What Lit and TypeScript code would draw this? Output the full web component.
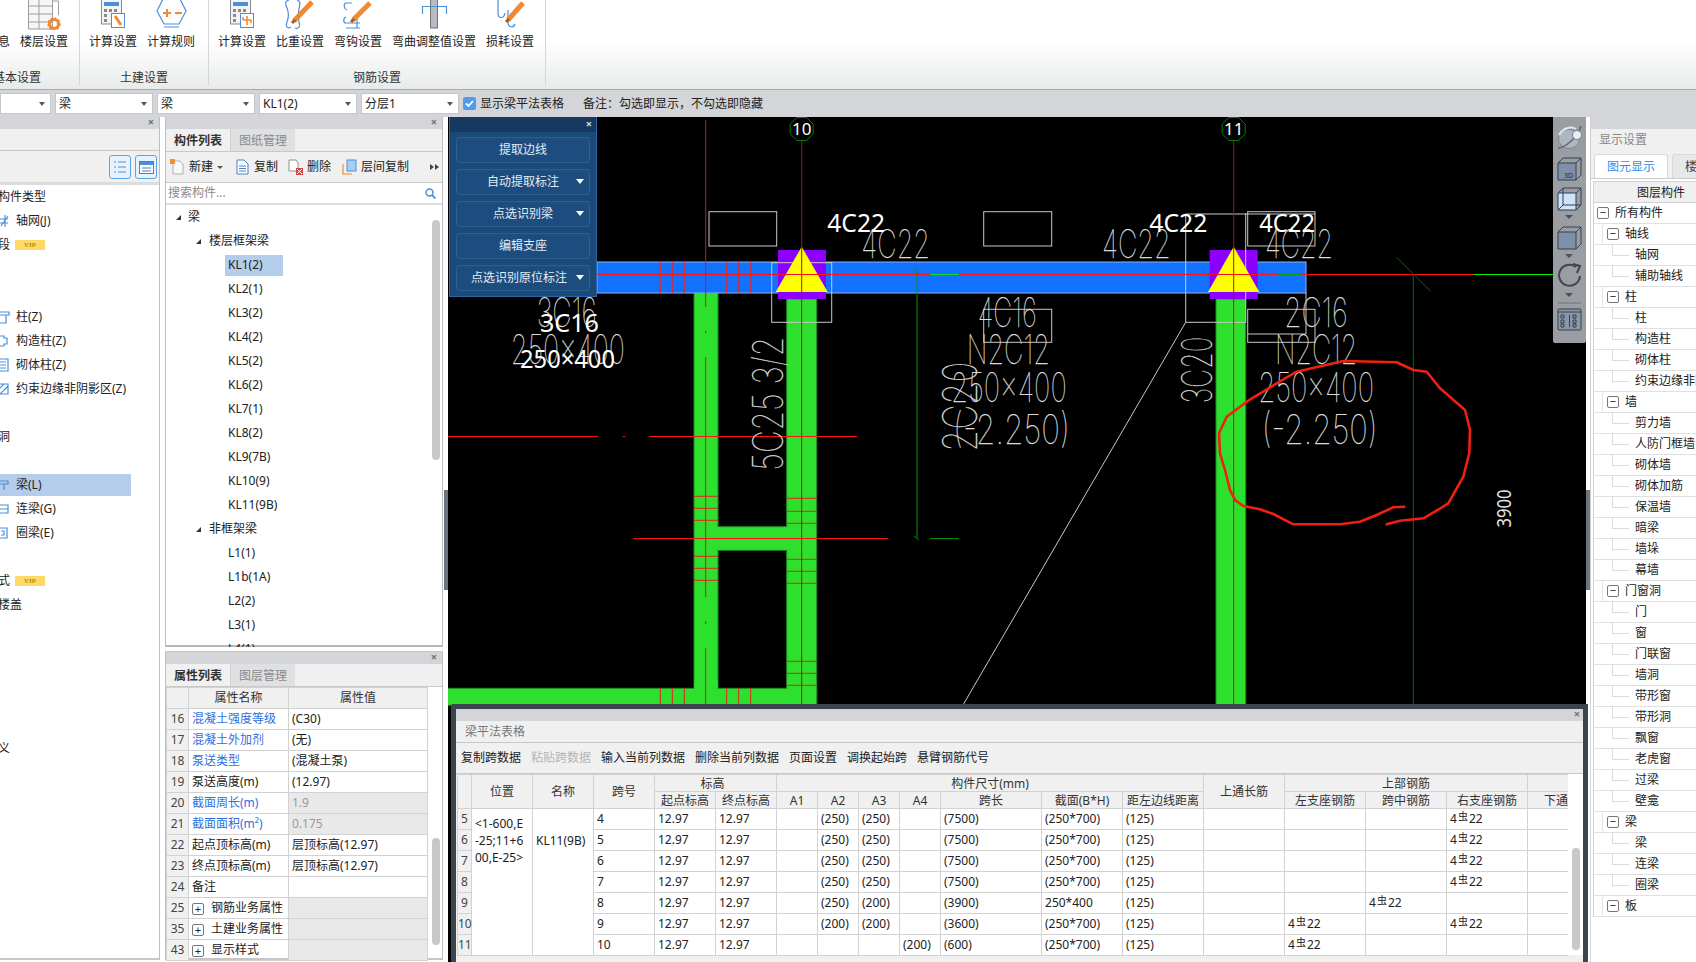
import { LitElement, html, svg, css } from 'lit';
import { customElement } from 'lit/decorators.js';

const pencil = (x1: number, y1: number, x2: number, y2: number) => svg`
  <line x1=${x1} y1=${y1} x2=${x2} y2=${y2} stroke="#f08a30" stroke-width="5"/>
  <line x1=${x1 - 2} y1=${y1 + 2} x2=${x1 + 1} y2=${y1 - 1} stroke="#a85a20" stroke-width="3"/>`;

const calcSheet = svg`
  <rect x="8.5" y="-3" width="20" height="27" fill="#f4f4f4" stroke="#858a90"/>
  <rect x="11" y="2" width="15" height="4" fill="#4a90d9"/>
  <path d="M11 9h3v3h-3zM16 9h3v3h-3zM21 9h3v3h-3zM11 14h3v3h-3zM11 19h3v3h-3z" fill="#858a90"/>
  <rect x="18.5" y="13.5" width="13" height="14" fill="#fff" stroke="#4a90d9"/>`;

const ribbonIcons: Record<string, unknown> = {
  floor: svg`
    <path d="M4.5 -2v31h24v-31M4.5 6h24M4.5 14h24M4.5 22h24M15 -2v31" fill="#f6f6f6" stroke="#9a9ea3"/>
    <path d="M28.5 1h6v14" fill="none" stroke="#9a9ea3"/>
    <circle cx="30" cy="24" r="4.5" fill="none" stroke="#f08a30" stroke-width="3"/>
    <circle cx="30" cy="24" r="6" fill="none" stroke="#f08a30" stroke-width="1.5" stroke-dasharray="2 2"/>`,
  calcTool: svg`${calcSheet}<path d="M22 16l6 9" stroke="#f08a30" stroke-width="3"/>`,
  rule: svg`
    <path d="M6 11L13 -3H28L35 11L28 24H13Z" fill="#fff" stroke="#4a90d9" stroke-width="1.2"/>
    <path d="M12 13h8M16 9v8M24 13h7" stroke="#f08a30" stroke-width="2" fill="none"/>
    <path d="M13 27h15" stroke="#4a90d9"/>`,
  calcRebar: svg`${calcSheet}<path d="M21 20h8M25 16v9M21 20v-3M29 20v3" stroke="#f08a30" stroke-width="1.6" fill="none"/>`,
  weight: svg`
    <path d="M9 0C5 1 5 4 7 8C9 13 9 17 7 22C5 27 8 29 11 27M17 0C21 1 20 5 19 9C18 14 18 18 19 22C21 28 17 29 15 28" fill="none" stroke="#4a90d9" stroke-width="1.2"/>
    ${pencil(14, 21, 32, 2)}`,
  hook: svg`
    <path d="M14 3H8C5 4 6 9 9 10M8 23H22M8 17C5 18 5 23 8 23M19 14V28M8 28H22" fill="none" stroke="#4a90d9" stroke-width="1.2"/>
    ${pencil(15, 20, 32, 3)}`,
  bend: svg`
    <rect x="16.5" y="-2" width="7" height="30" fill="#b8bcc0" stroke="#6f7479"/>
    <path d="M8.5 14V6.5H32.5V14" fill="none" stroke="#4a90d9" stroke-width="1.2"/>`,
  loss: svg`
    <path d="M8 -2V13C8 19 14 19 15 13M18 10V22C18 28 24 28 25 24" fill="none" stroke="#4a90d9" stroke-width="1.2"/>
    ${pencil(18, 20, 33, 3)}`,
};

const ribbon = [
  { label: '基本设置', width: 80, end: true, items: [['息', ''], ['楼层设置', 'floor']] },
  { label: '土建设置', width: 129, items: [['计算设置', 'calcTool'], ['计算规则', 'rule']] },
  {
    label: '钢筋设置', width: 337, items: [['计算设置', 'calcRebar'], ['比重设置', 'weight'], ['弯钩设置', 'hook'],
      ['弯曲调整值设置', 'bend'], ['损耗设置', 'loss']],
  },
];

const leftIcon = (d: string) => html`<svg class="left-ico" viewBox="0 0 10 14"><path d=${d} fill="none" stroke="#4a8fd8" stroke-width="1.2"/></svg>`;

const leftRows: Array<{ t?: string; icon?: string; vip?: boolean; sel?: boolean; cut?: boolean }> = [
  { t: '构件类型', cut: true },
  { t: '轴网(J)', icon: 'M-2 5H8M-2 9H8M5 1V13M1 12L8 2' },
  { t: '段', cut: true, vip: true },
  {}, {},
  { t: '柱(Z)', icon: 'M-2 2H9V5H-2M6 5V13H-2' },
  { t: '构造柱(Z)', icon: 'M-2 2H4V4H7V10H4V12H-2' },
  { t: '砌体柱(Z)', icon: 'M-2 1H8V13H-2M0 4H6M0 7H6M0 10H6' },
  { t: '约束边缘非阴影区(Z)', icon: 'M-2 2H8V12H-2ZM0 12L8 4M-2 8L4 2' },
  {},
  { t: '洞', cut: true },
  {},
  { t: '梁(L)', sel: true, icon: 'M-2 3H8V6H-2M4 6V12' },
  { t: '连梁(G)', icon: 'M-2 3H8V11H-2M-2 7H8' },
  { t: '圈梁(E)', icon: 'M-2 2H7V12H-2M1 5H4V9H1' },
  {},
  { t: '式', cut: true, vip: true },
  { t: '楼盖', cut: true },
  {}, {}, {}, {}, {},
  { t: '义', cut: true },
];

const treeRows: Array<[string, number]> = [
  ['梁', 0], ['楼层框架梁', 1],
  ['KL1(2)', 2], ['KL2(1)', 2], ['KL3(2)', 2], ['KL4(2)', 2], ['KL5(2)', 2], ['KL6(2)', 2],
  ['KL7(1)', 2], ['KL8(2)', 2], ['KL9(7B)', 2], ['KL10(9)', 2], ['KL11(9B)', 2],
  ['非框架梁', 1], ['L1(1)', 2], ['L1b(1A)', 2], ['L2(2)', 2], ['L3(1)', 2], ['L4(1)', 2],
];

const props: Array<{ n: number; name: string; val?: string; link?: boolean; grey?: boolean; plus?: boolean }> = [
  { n: 16, name: '混凝土强度等级', val: '(C30)', link: true },
  { n: 17, name: '混凝土外加剂', val: '(无)', link: true },
  { n: 18, name: '泵送类型', val: '(混凝土泵)', link: true },
  { n: 19, name: '泵送高度(m)', val: '(12.97)' },
  { n: 20, name: '截面周长(m)', val: '1.9', link: true, grey: true },
  { n: 21, name: '截面面积(m²)', val: '0.175', link: true, grey: true },
  { n: 22, name: '起点顶标高(m)', val: '层顶标高(12.97)' },
  { n: 23, name: '终点顶标高(m)', val: '层顶标高(12.97)' },
  { n: 24, name: '备注', val: '' },
  { n: 25, name: '钢筋业务属性', plus: true, grey: true },
  { n: 35, name: '土建业务属性', plus: true, grey: true },
  { n: 43, name: '显示样式', plus: true, grey: true },
];

const layers: Array<[string, number]> = [
  ['所有构件', 0], ['轴线', 1], ['轴网', 2], ['辅助轴线', 2], ['柱', 1], ['柱', 2], ['构造柱', 2], ['砌体柱', 2],
  ['约束边缘非阴影区', 2], ['墙', 1], ['剪力墙', 2], ['人防门框墙', 2], ['砌体墙', 2], ['砌体加筋', 2], ['保温墙', 2],
  ['暗梁', 2], ['墙垛', 2], ['幕墙', 2], ['门窗洞', 1], ['门', 2], ['窗', 2], ['门联窗', 2], ['墙洞', 2], ['带形窗', 2],
  ['带形洞', 2], ['飘窗', 2], ['老虎窗', 2], ['过梁', 2], ['壁龛', 2], ['梁', 1], ['梁', 2], ['连梁', 2], ['圈梁', 2], ['板', 1],
];

const spans: Array<{ no: string; a2: string; a3: string; a4: string; len: string; sec: string; mid?: boolean; l?: boolean; r?: boolean }> = [
  { no: '4', a2: '(250)', a3: '(250)', a4: '', len: '(7500)', sec: '(250*700)', r: true },
  { no: '5', a2: '(250)', a3: '(250)', a4: '', len: '(7500)', sec: '(250*700)', r: true },
  { no: '6', a2: '(250)', a3: '(250)', a4: '', len: '(7500)', sec: '(250*700)', r: true },
  { no: '7', a2: '(250)', a3: '(250)', a4: '', len: '(7500)', sec: '(250*700)', r: true },
  { no: '8', a2: '(250)', a3: '(200)', a4: '', len: '(3900)', sec: '250*400', mid: true },
  { no: '9', a2: '(200)', a3: '(200)', a4: '', len: '(3600)', sec: '(250*700)', l: true, r: true },
  { no: '10', a2: '', a3: '', a4: '(200)', len: '(600)', sec: '(250*700)', l: true },
];
const colWidths = [14, 61, 61, 61, 61, 61, 41, 41, 41, 41, 101, 81, 81, 81, 81, 81, 81, 81];

// cad drawing, all numbers are page coordinates
const thin: Array<[string, number, number, number, number]> = [
  ['4C22', 861.3, 229.3, 930, 258.3], ['4C22', 1102, 229.3, 1170.7, 258.3], ['4C22', 1265, 229.3, 1333, 258.3],
  ['3C16', 536.7, 296.7, 596.7, 326.7], ['250×400', 510.7, 334, 625, 364],
  ['4C16', 977.7, 296.7, 1036.7, 326.7], ['N2C12', 966.7, 334, 1050, 364],
  ['250×400', 951, 371.7, 1066.7, 401.7], ['(-2.250)', 953, 414, 1070, 444],
  ['2C16', 1284.3, 296.7, 1347.7, 326.7], ['N2C12', 1275, 334, 1357.3, 364],
  ['250×400', 1258.3, 371.7, 1374, 401.7], ['(-2.250)', 1261.7, 414, 1377.7, 444],
];
const thinUp: Array<[string, number, number, number, number]> = [
  ['5C25 3/2', 752.7, 336.7, 783.3, 470.7], ['3C20', 1181.7, 336.7, 1212.3, 403.3], ['2C20', 942, 361.7, 976.7, 451.7],
];
const bright: Array<[string, number, number, number]> = [
  ['4C22', 827.3, 885, 231.7], ['4C22', 1149.3, 1207.3, 231.7], ['4C22', 1259.3, 1315, 231.7],
  ['3C16', 540, 599, 331.7], ['250×400', 520, 615, 368],
];
const rects = [[709, 211.7, 67.7, 34.3], [983.7, 211.7, 68, 34.3], [771.7, 262.7, 60, 59.6], [983.7, 309.3, 68, 33],
  [1185.7, 214, 60, 108.3], [1247.7, 211.7, 67.3, 34.3], [1247.7, 309.3, 67.3, 33]];
const beamTicks = [660.3, 672.3, 684.3, 726.7, 738.7, 750.7];
const colATicks = [496.3, 508.3, 520.3, 556.3, 568.3, 580.3];
const colBTicks = [498.3, 511.3, 523.3, 559.3, 571.3, 583.3, 661.3, 673.3, 685.3];
const circle = [[1213, 1190], [1180, 1192], [1130, 1215], [1080, 1235], [1020, 1243], [880, 1243], [820, 1212], [780, 1198],
  [730, 1188], [705, 1170], [690, 1140], [675, 1080], [660, 1030], [657, 970], [680, 920], [740, 875], [830, 820], [890, 785],
  [1030, 753], [1190, 757], [1240, 780], [1280, 785], [1320, 835], [1395, 900], [1410, 960], [1408, 1030], [1390, 1100],
  [1345, 1180], [1305, 1205], [1270, 1225], [1200, 1232], [1160, 1243]]
  .map(([x, y]) => `${(1000 + x / 3).toFixed(1)},${(110 + y / 3).toFixed(1)}`).join(' ');

const octagon = (cx: number, cy: number) => Array.from({ length: 8 }, (_, i) => {
  const a = Math.PI / 8 + (i * Math.PI) / 4;
  return `${(cx + 12.5 * Math.cos(a)).toFixed(1)},${(cy + 12.5 * Math.sin(a)).toFixed(1)}`;
}).join(' ');

@customElement('app-root')
export class AppRoot extends LitElement {
  static override styles = css`
    :host {
      display: block;
      width: 1696px;
      height: 962px;
      overflow: hidden;
      background: #fff;
      color: #222;
      font: 12px/16px "Noto Sans", "Noto Sans CJK SC", sans-serif;
    }

    .ribbon { height: 89px; display: flex; background: linear-gradient(#fff 45%, #e9ebeb); box-sizing: border-box; }
    .group { display: flex; flex-direction: column; border-right: 1px solid #d4d6d8; box-sizing: border-box; height: 86px; overflow: hidden; flex: none; }
    .group-items { display: flex; height: 72px; padding-left: 4px; }
    .group.end .group-items { justify-content: flex-end; padding: 0 6px 0 0; }
    .group-label { text-align: center; color: #333; white-space: nowrap; }
    .rib-item { padding: 0 5px; display: flex; flex-direction: column; align-items: center; flex: none; white-space: nowrap; }
    .rib-item svg { width: 40px; height: 30px; display: block; margin-bottom: 4px; }
    .rib-item .no-ico { height: 34px; }

    .bar { height: 28px; background: #d3d5d9; border-top: 1px solid #a9acaf; box-sizing: border-box; display: flex; align-items: center; gap: 4px; }
    .combo { width: 98px; height: 21px; background: #fff; border: 1px solid #c4c6c9; box-sizing: border-box; padding-left: 3px; line-height: 19px; position: relative; }
    .combo.first { width: 51px; }
    .combo::after { content: ''; position: absolute; right: 5px; top: 8px; border: 3.5px solid transparent; border-top: 4px solid #555; border-bottom: 0; }
    .check { width: 13px; height: 13px; background: #4f9df0; border-radius: 2px; display: flex; align-items: center; justify-content: center; }
    .bar-note { margin-left: 15px; }

    .main { display: flex; height: 845px; }
    .pane { border-right: 1px solid #bcbec0; border-left: 1px solid #bcbec0; box-sizing: border-box; position: relative; background: #fff; }
    .pane-head { height: 12px; background: #d3d5d9; position: relative; }
    .close { position: absolute; right: 5px; top: -3px; font-size: 11px; color: #6d7278; font-weight: 700; line-height: 16px; }

    .left { width: 160px; height: 843px; border-left: 0; border-bottom: 2px solid #c4c6c9; }
    .left-tool { height: 50px; background: #f0f0f0; border-bottom: 3px solid #dcdcdc; display: flex; justify-content: flex-end; align-items: flex-end; gap: 4px; padding: 0 2px 3px 0; position: relative; }
    .left-tool::before { content: ''; position: absolute; left: 0; right: 0; top: 21px; height: 1px; background: #c8c8c8; }
    .vbtn { width: 22px; height: 24px; border: 1px solid #58a6e8; border-radius: 3px; box-sizing: border-box; background: #e8f2fc; display: flex; align-items: center; justify-content: center; }
    .left-list { display: flex; flex-direction: column; }
    .left-row { height: 24px; display: flex; align-items: center; padding-left: 16px; position: relative; white-space: nowrap; }
    .left-row.cut { padding-left: 0; margin-left: -2px; }
    .left-row.sel::before { content: ''; position: absolute; left: 0; top: 1px; width: 131px; height: 22px; background: #b4cdea; }
    .left-row span { position: relative; }
    .left-ico { position: absolute; left: 0; top: 5px; width: 10px; height: 14px; overflow: visible; }
    .vip { margin-left: 5px; width: 30px; height: 10px; background: #ffd966; color: #b38b1f; font: 700 7px/10px "Liberation Serif", serif; text-align: center; }

    .mid { width: 278px; margin-left: 5px; display: flex; flex-direction: column; }
    .mid-top { height: 530px; border-bottom: 2px solid #b4b6b8; }
    .mid-bottom { height: 309px; margin-top: 4px; border-top: 1px solid #c4c6c9; border-bottom: 2px solid #c4c6c9; }
    .tabs { height: 22px; background: #f0f0f0; display: flex; border-bottom: 1px solid #c8c8c8; }
    .tab { width: 64px; text-align: center; line-height: 23px; font-weight: 700; color: #333; background: #f0f0f0; }
    .tab.off { background: #dfe0e2; color: #8a8a8a; font-weight: 400; width: 64px; border-left: 1px solid #d0d0d0; }
    .mid-tool { height: 30px; background: #f0f0f0; display: flex; align-items: center; border-bottom: 1px solid #c8c8c8; position: relative; }
    .tool-item { display: flex; align-items: center; gap: 4px; white-space: nowrap; flex: none; }
    .tool-item svg { width: 15px; height: 16px; flex: none; }
    .caret-s { width: 0; height: 0; border: 3px solid transparent; border-top: 3px solid #555; border-bottom: 0; margin-left: 0; }
    .more { position: absolute; right: 3px; top: 11px; width: 9px; height: 8px; }
    .search { height: 20px; border-bottom: 2px solid #dcdcdc; display: flex; align-items: center; justify-content: space-between; padding: 0 6px 0 2px; color: #8a8a8a; }
    .tree { position: relative; height: 442px; overflow: hidden; }
    .tree-row { height: 24px; display: flex; align-items: center; white-space: nowrap; position: relative; }
    .tree-row.l0 { padding-left: 22px; }
    .tree-row.l1 { padding-left: 43px; }
    .tree-row.l2 { padding-left: 62px; }
    .tree-row.sel::before { content: ''; position: absolute; left: 59px; top: 2px; width: 58px; height: 21px; background: #b4cdea; }
    .tree-row span { position: relative; }
    .arrow { position: absolute; top: 10px; width: 0; height: 0; border-left: 5px solid transparent; border-bottom: 5px solid #333; }
    .l0 .arrow { left: 10px; }
    .l1 .arrow { left: 30px; }
    .thumb { position: absolute; background: #c8c8c8; border-radius: 4px; width: 8px; }
    .tree .thumb { left: 266px; top: 15px; height: 240px; }

    .ptable { border-collapse: collapse; table-layout: fixed; width: 261px; }
    .ptable td, .ptable th { height: 20px; padding: 0 3px; border: 1px solid #d2d2d2; font-weight: 400; white-space: nowrap; overflow: hidden; box-sizing: border-box; }
    .ptable th { background: #f0f0f0; color: #333; text-align: center; }
    .ptable tr { height: 21px; }
    .ptable .num { background: #f0f0f0; color: #444; text-align: center; padding: 0; }
    .ptable .link { color: #2f6fe0; }
    .ptable .grey-v { background: #e9e9e9; color: #999; }
    .plus { display: inline-block; width: 12px; height: 12px; border: 1px solid #777; border-radius: 2px; box-sizing: border-box; text-align: center; font: 11px/10px "Liberation Sans", sans-serif; margin-right: 7px; vertical-align: -1px; }
    .pwrap { position: relative; }
    .pwrap .thumb { left: 266px; top: 151px; height: 107px; }

    .canvas { width: 1138px; height: 845px; margin-left: 5px; background: #000; position: relative; flex: none; }
    .canvas > svg { display: block; position: absolute; inset: 0; }
    .handle { position: absolute; width: 4px; height: 100px; top: 373px; background: #6d7580; }
    .handle.l { left: -4px; }
    .handle.r { right: -4px; }

    .cad-panel { position: absolute; left: 1px; top: 0; width: 148px; height: 180px; background: #1c4a78; border: 1px solid #2a68a8; border-top: 0; box-sizing: border-box; }
    .cad-head { height: 15px; background: #17395f; position: relative; }
    .cad-head .close { color: #cfd8e2; top: -1px; right: 4px; }
    .cad-btns { display: flex; flex-direction: column; gap: 6px; padding: 5px 6px 0; }
    .cad-btn { height: 26px; border: 1px solid #2d5f90; border-radius: 3px; box-sizing: border-box; background: #1d4d7f; color: #e4ebf2; display: flex; align-items: center; justify-content: center; position: relative; }
    .cad-btn.caret::after { content: ''; position: absolute; right: 5px; top: 9px; border: 4px solid transparent; border-top: 5px solid #fff; border-bottom: 0; }
    .cad-btn.long { padding-right: 8px; }

    .side-tools { position: absolute; left: 1105px; top: 0; width: 33px; height: 226px; background: #9a9da2; border-radius: 0 0 2px 2px; }
    .side-tools svg { display: block; width: 33px; height: 226px; }

    .dialog { position: absolute; left: 3px; top: 587px; width: 1137px; height: 258px; background: #f0f0f0; border: 5px solid #3c444c; border-bottom: 0; box-sizing: border-box; border-top-left-radius: 3px; }
    .dlg-head { height: 12px; background: #d3d5d9; position: relative; }
    .dlg-head .close { right: 3px; }
    .dlg-title { height: 21px; line-height: 22px; padding-left: 9px; color: #777; border-bottom: 1px solid #c8c8c8; }
    .dlg-tool { height: 31px; display: flex; align-items: center; gap: 10px; padding-left: 5px; border-bottom: 1px solid #c8c8c8; white-space: nowrap; box-sizing: border-box; }
    .dlg-tool .off { color: #b5b5b5; }
    .dlg-body { position: relative; height: 188px; }
    .sheet-wrap { position: absolute; left: 1px; top: 0; width: 1111px; height: 188px; overflow: hidden; }
    .sheet { border-collapse: collapse; table-layout: fixed; width: 1151px; }
    .sheet td, .sheet th { border: 1px solid #d2d2d2; padding: 0 3px; height: 21px; font-weight: 400; white-space: nowrap; box-sizing: border-box; background: #fff; }
    .sheet th { height: 17px; background: #f0f0f0; color: #333; line-height: 15px; padding: 0; text-align: center; }
    .sheet .rownum { background: #f0f0f0; padding: 0; color: #444; text-align: center; overflow: visible; }
    .sheet .place { vertical-align: top; white-space: normal; line-height: 17px; padding-top: 6px; }
    .sheet .kl { vertical-align: top; padding-top: 24px; }
    .sheet .elev { padding-right: 6px; }
    .sup { font-size: 10px; position: relative; top: -3px; margin: 0 1px; }
    .track { position: absolute; left: 1112px; top: 0; width: 15px; height: 181px; background: #fff; }
    .track .thumb { left: 4px; top: 74px; height: 102px; }

    .right { width: 106px; height: 845px; margin-left: 4px; background: #fff; flex: none; overflow: hidden; position: relative; border-left: 1px solid #d0d0d0; box-sizing: border-box; }
    .r-title { height: 23px; background: #f0f0f0; color: #888; line-height: 22px; padding-left: 8px; }
    .r-tabs { height: 27px; background: #f0f0f0; display: flex; align-items: flex-end; gap: 4px; padding-left: 3px; border-bottom: 1px solid #c8c8c8; box-sizing: border-box; }
    .r-tab { width: 74px; height: 24px; background: #fff; color: #3a8be8; text-align: center; line-height: 24px; border: 1px solid #d8d8d8; border-bottom: 0; border-radius: 3px 3px 0 0; box-sizing: border-box; flex: none; }
    .r-tab.off { background: #e8e8e8; color: #444; padding-left: 12px; text-align: left; }
    .r-grid { margin: 2px 0 0 2px; width: 130px; border-left: 1px solid #d2d2d2; }
    .r-head { height: 22px; background: #f0f0f0; text-align: center; line-height: 22px; width: 134px; border-bottom: 1px solid #d2d2d2; box-sizing: border-box; border-top: 1px solid #d2d2d2; }
    .r-row { height: 21px; border-bottom: 1px solid #e0e0e0; box-sizing: border-box; display: flex; align-items: center; position: relative; white-space: nowrap; }
    .r-row.l0 { padding-left: 21px; }
    .r-row.l1 { padding-left: 31px; }
    .r-row.l2 { padding-left: 41px; }
    .minus { position: absolute; top: 4px; width: 12px; height: 12px; border: 1px solid #777; border-radius: 2px; box-sizing: border-box; background: #fff; font: 11px/9px "Liberation Sans", sans-serif; text-align: center; }
    .l0 .minus { left: 3px; }
    .l1 .minus { left: 13px; }
    .r-row.l2::before { content: ''; position: absolute; left: 18px; top: 10px; width: 17px; height: 1px; background: #dcdcdc; }
    .r-row.l2::after { content: ''; position: absolute; left: 18px; top: -1px; width: 1px; height: 12px; background: #dcdcdc; }
    .r-row .v { position: absolute; left: 8px; top: -1px; width: 1px; height: 22px; background: #e4e4e4; }
  `;

  private cad() {
    const green = '#2de02d';
    const edge = '#1e8c1e';
    return html`<svg width="1138" height="845" viewBox="448 117 1138 845">
      <g fill=${green} stroke=${edge}>
        <rect x="694" y="293" width="24" height="412"/>
        <rect x="786.7" y="299" width="30" height="406"/>
        <rect x="1216" y="299" width="29.7" height="406"/>
        <rect x="718" y="526.7" width="68.7" height="23.6"/>
        <rect x="447" y="688.3" width="369.7" height="17"/>
      </g>
      <g fill=${green}>
        <rect x="716" y="527.2" width="4" height="22.6"/>
        <rect x="784" y="527.2" width="5" height="22.6"/>
        <rect x="694.5" y="680" width="23" height="12"/>
        <rect x="787.2" y="680" width="29" height="12"/>
      </g>
      <rect x="597" y="262" width="709" height="31" fill="#1272ff" stroke="#8ab4f0"/>

      ${beamTicks.map((x) => svg`<line x1=${x} x2=${x} y1="262" y2="293" stroke="#e8201c"/><line x1=${x} x2=${x} y1="688" y2="704" stroke="#e8201c"/>`)}
      ${colATicks.map((y) => svg`<line x1="694" x2="718" y1=${y} y2=${y} stroke="#f01c1c"/>`)}
      ${colBTicks.map((y) => svg`<line x1="787" x2="817" y1=${y} y2=${y} stroke="#f01c1c"/>`)}

      <g fill="#8b00ff">
        <rect x="778" y="250" width="48" height="49"/>
        <rect x="1209.7" y="250" width="48" height="49"/>
      </g>

      <g stroke="#c8c8c8" fill="none">
        ${rects.map(([x, y, w, h]) => svg`<rect x=${x} y=${y} width=${w} height=${h}/>`)}
        <path d="M1245 214H1315M1306 293V334M1247.7 334H1306"/>
        <path d="M1185.7 322.3L963.6 704"/>
      </g>

      <polygon points="801.7,246.7 775.7,292 827.7,292" fill="#ffff00"/>
      <polygon points="1233.7,246.7 1208,292 1259.3,292" fill="#ffff00"/>

      <g fill="none" stroke-width="1">
        <path d="M801.7 140V704M1233.7 140V704" stroke="#b8100c"/>
        <path d="M705.7 120V307M705.7 331V333.5M705.7 357V597M705.7 621V624M705.7 648V704" stroke="#c4201a"/>
        <path d="M597 274.5H1473M448 436.5H598M623 436.5H625M649 436.5H857M633 538.5H888" stroke="#ff1010"/>
        <path d="M1473 274.5H1553" stroke="#00f000"/>
        <path d="M930 274.5H959" stroke="#10e020"/>
        <path d="M1277 274.5H1302" stroke="#0a9a0a"/>
        <path d="M930 538.5H959" stroke="#0a8a0a"/>
        <path d="M917 272V538M914 270L919 274M914 536L919 540" stroke="#0c8a0c"/>
        <path d="M1413.3 274.3V704M1396.7 257.3L1430.7 291.3" stroke="#0a6a0a"/>
      </g>

      <polygon points=${octagon(801.7, 129)} fill="none" stroke="#0a7a0a"/>
      <polygon points=${octagon(1233.7, 129)} fill="none" stroke="#0a7a0a"/>
      <g font-family="Noto Sans, sans-serif" fill="#fff" font-size="17" text-anchor="middle">
        <text x="801.7" y="135">10</text>
        <text x="1233.7" y="135">11</text>
      </g>

      <g font-family="Inter, sans-serif" font-weight="100" fill="#dcdcdc" stroke="#dcdcdc" stroke-width="0.25">
        ${thin.map(([t, x1, y1, x2, y2]) => svg`<text x=${x1} y=${y2} font-size=${(y2 - y1) / 0.727} textLength=${x2 - x1} lengthAdjust="spacingAndGlyphs">${t}</text>`)}
        ${thinUp.map(([t, x1, y1, x2, y2]) => svg`<text transform="translate(${x2} ${y2}) rotate(-90)" font-size=${(x2 - x1) / 0.727} textLength=${y2 - y1} lengthAdjust="spacingAndGlyphs">${t}</text>`)}
      </g>
      <g font-family="Noto Sans, sans-serif" fill="#fff" font-size="25">
        ${bright.map(([t, x1, x2, y]) => svg`<text x=${x1} y=${y} textLength=${x2 - x1} lengthAdjust="spacingAndGlyphs">${t}</text>`)}
      </g>
      <text transform="translate(1510.5 527.5) rotate(-90)" font-family="Noto Sans, sans-serif" font-size="19" fill="#e4e4e4" textLength="38" lengthAdjust="spacingAndGlyphs">3900</text>

      <polyline points=${circle} fill="none" stroke="#f02010" stroke-width="2.6" stroke-linejoin="round" stroke-linecap="round"/>
    </svg>`;
  }

  private sideTools() {
    const cube = (y: number, fill: string, extra: unknown) => svg`
      <g transform="translate(4 ${y})" stroke="#33404f" stroke-width="1" fill=${fill}>
        <path d="M1 6H19V23H1Z"/>
        <path d="M1 6L6 1H24V18L19 23M19 6L24 1" fill="none"/>
        ${extra}
      </g>`;
    const caret = (y: number) => svg`<path d="M12 ${y}h8l-4 4z" fill="#4b5158"/>`;
    return html`<svg viewBox="0 0 33 226">
      <ellipse cx="16" cy="22" rx="10.5" ry="9.5" fill="#aeb6c2" stroke="#7c8591"/>
      <path d="M5 31C11 31 25 21 28 9" fill="none" stroke="#5d6672" stroke-width="1.5"/>
      <path d="M6 18C10 11 18 9 23 12" fill="none" stroke="#e4e8ee" stroke-width="2"/>
      <circle cx="24" cy="18" r="4.5" fill="#e8edf2" stroke="#7a838e"/>
      ${cube(40, '#7f91a8', svg`<text x="7" y="21" font-size="7" font-family="Noto Sans, sans-serif" fill="#1e2a38" stroke="none">3D</text>`)}
      ${cube(70, '#cfe2fb', svg`<path d="M6 1V18H24M6 18L1 23" fill="none"/>`)}
      ${caret(98)}
      ${cube(109, '#7f91a8', '')}
      ${caret(137)}
      <path d="M27 159A10.5 10.5 0 1 1 23 150" fill="none" stroke="#3d4654" stroke-width="2"/>
      <path d="M20 147L27 149L24 156" fill="none" stroke="#3d4654" stroke-width="2"/>
      ${caret(176)}
      <line x1="5" x2="28" y1="186" y2="186" stroke="#6b7078"/>
      <g stroke="#33404f" fill="#8a97a8">
        <rect x="5" y="192" width="23" height="21" rx="1"/>
        <path d="M5 195H28M16.5 198V210M8 198h3v3h-3zM8 203h3v3h-3zM8 207h3v3h-3zM20 198h3v3h-3zM20 203h3v3h-3zM20 207h3v3h-3z" fill="none"/>
      </g>
    </svg>`;
  }

  private toolIcon(kind: string) {
    if (kind === 'new') return html`<svg viewBox="0 0 15 16"><path d="M3 2H10L13 5V15H3Z" fill="#f8f8f8" stroke="#b0b0b0"/><rect x="0" y="0" width="5" height="5" fill="#f09030"/></svg>`;
    if (kind === 'copy') return html`<svg viewBox="0 0 15 16"><path d="M2 1H9L13 5V15H2ZM4 7H11M4 9.5H11M4 12H11" fill="#fff" stroke="#4a80c0"/></svg>`;
    if (kind === 'del') return html`<svg viewBox="0 0 15 16"><path d="M1 1H8L10 4V12H1Z" fill="#fff" stroke="#909090"/><rect x="8" y="9" width="7" height="7" fill="#e04040"/><path d="M9 10L14 15M14 10L9 15" stroke="#fff"/></svg>`;
    return html`<svg viewBox="0 0 15 16"><path d="M1 5V15H10" fill="none" stroke="#f08a30" stroke-width="1.2"/><rect x="5" y="1" width="9" height="11" fill="#a8cdf5" stroke="#4a90d9"/></svg>`;
  }

  private rebar() {
    return html`4<span class="sup">虫</span>22`;
  }

  override render() {
    return html`
      <div class="ribbon">
        ${ribbon.map((g) => html`
          <div class="group ${g.end ? 'end' : ''}" style="width:${g.width}px">
            <div class="group-items">
              ${g.items.map(([t, ico]) => html`
                <div class="rib-item">
                  ${ico ? html`<svg viewBox="0 0 40 30">${ribbonIcons[ico]}</svg>` : html`<div class="no-ico"></div>`}
                  <span>${t}</span>
                </div>`)}
            </div>
            <div class="group-label" style=${g.end ? 'margin-left:-7px;width:48px' : ''}>${g.label}</div>
          </div>`)}
      </div>

      <div class="bar">
        <div class="combo first"></div>
        <div class="combo">梁</div>
        <div class="combo">梁</div>
        <div class="combo">KL1(2)</div>
        <div class="combo">分层1</div>
        <div class="check"><svg width="11" height="11" viewBox="0 0 11 11"><path d="M2 5.5L4.5 8L9 3" fill="none" stroke="#fff" stroke-width="1.8"/></svg></div>
        <span>显示梁平法表格</span>
        <span class="bar-note">备注：勾选即显示，不勾选即隐藏</span>
      </div>

      <div class="main">
        <div class="pane left">
          <div class="pane-head"><span class="close">×</span></div>
          <div class="left-tool">
            <div class="vbtn"><svg width="14" height="14" viewBox="0 0 14 14"><path d="M1 2h2M5 2h8M1 7h2M5 7h8M1 12h2M5 12h8" stroke="#4a90d9" fill="none"/></svg></div>
            <div class="vbtn"><svg width="15" height="13" viewBox="0 0 15 13"><rect x="0.5" y="0.5" width="14" height="12" fill="#fff" stroke="#4a80c0"/><rect x="1" y="1" width="13" height="3" fill="#4a90d9"/><path d="M3 7h9M3 10h9" stroke="#4a80c0"/></svg></div>
          </div>
          <div class="left-list">
            ${leftRows.map((r) => html`
              <div class="left-row ${r.cut ? 'cut' : ''} ${r.sel ? 'sel' : ''}">
                ${r.icon ? leftIcon(r.icon) : ''}
                <span>${r.t ?? ''}</span>
                ${r.vip ? html`<div class="vip">VIP</div>` : ''}
              </div>`)}
          </div>
        </div>

        <div class="mid">
          <div class="pane mid-top">
            <div class="pane-head"><span class="close">×</span></div>
            <div class="tabs"><div class="tab">构件列表</div><div class="tab off">图纸管理</div></div>
            <div class="mid-tool">
              <div class="tool-item" style="margin-left:4px">${this.toolIcon('new')}<span>新建</span><i class="caret-s"></i></div>
              <div class="tool-item" style="margin-left:12px">${this.toolIcon('copy')}<span>复制</span></div>
              <div class="tool-item" style="margin-left:10px">${this.toolIcon('del')}<span>删除</span></div>
              <div class="tool-item" style="margin-left:11px">${this.toolIcon('floor')}<span>层间复制</span></div>
              <svg class="more" viewBox="0 0 9 8"><path d="M0 1L4 4L0 7ZM5 1L9 4L5 7Z" fill="#444"/></svg>
            </div>
            <div class="search">
              <span>搜索构件...</span>
              <svg width="11" height="11" viewBox="0 0 11 11"><circle cx="4.5" cy="4.5" r="3.5" fill="none" stroke="#4a90d9" stroke-width="1.5"/><path d="M7 7L10.500 10.500" stroke="#4a90d9" stroke-width="1.8"/></svg>
            </div>
            <div class="tree">
              ${treeRows.map(([t, l], i) => html`
                <div class="tree-row l${l} ${i === 2 ? 'sel' : ''}">
                  ${l < 2 ? html`<i class="arrow"></i>` : ''}
                  <span>${t}</span>
                </div>`)}
              <div class="thumb"></div>
            </div>
          </div>

          <div class="pane mid-bottom">
            <div class="pane-head"><span class="close">×</span></div>
            <div class="tabs"><div class="tab">属性列表</div><div class="tab off">图层管理</div></div>
            <div class="pwrap">
              <table class="ptable">
                <colgroup><col style="width:22px"/><col style="width:100px"/><col style="width:139px"/></colgroup>
                <tr><th></th><th>属性名称</th><th>属性值</th></tr>
                ${props.map((p) => html`
                  <tr>
                    <td class="num">${p.n}</td>
                    <td class=${p.link ? 'link' : ''}>${p.plus ? html`<i class="plus">+</i>` : ''}${p.name}</td>
                    <td class=${p.grey ? 'grey-v' : ''}>${p.val ?? ''}</td>
                  </tr>`)}
              </table>
              <div class="thumb"></div>
            </div>
          </div>
        </div>

        <div class="canvas">
          ${this.cad()}
          <div class="handle l"></div>
          <div class="handle r"></div>

          <div class="cad-panel">
            <div class="cad-head"><span class="close">×</span></div>
            <div class="cad-btns">
              <div class="cad-btn">提取边线</div>
              <div class="cad-btn caret">自动提取标注</div>
              <div class="cad-btn caret">点选识别梁</div>
              <div class="cad-btn">编辑支座</div>
              <div class="cad-btn caret long">点选识别原位标注</div>
            </div>
          </div>

          <div class="side-tools">${this.sideTools()}</div>

          <div class="dialog">
            <div class="dlg-head"><span class="close">×</span></div>
            <div class="dlg-title">梁平法表格</div>
            <div class="dlg-tool">
              <span>复制跨数据</span><span class="off">粘贴跨数据</span><span>输入当前列数据</span><span>删除当前列数据</span>
              <span>页面设置</span><span>调换起始跨</span><span>悬臂钢筋代号</span>
            </div>
            <div class="dlg-body">
              <div class="sheet-wrap">
                <table class="sheet">
                  <colgroup>${colWidths.map((w) => html`<col style="width:${w}px"/>`)}</colgroup>
                  <tr>
                    <th rowspan="2"></th><th rowspan="2">位置</th><th rowspan="2">名称</th><th rowspan="2">跨号</th>
                    <th colspan="2" class="elev">标高</th><th colspan="7">构件尺寸(mm)</th><th rowspan="2">上通长筋</th>
                    <th colspan="3">上部钢筋</th><th></th>
                  </tr>
                  <tr>
                    <th>起点标高</th><th>终点标高</th><th>A1</th><th>A2</th><th>A3</th><th>A4</th><th>跨长</th>
                    <th>截面(B*H)</th><th>距左边线距离</th><th>左支座钢筋</th><th>跨中钢筋</th><th>右支座钢筋</th><th>下通长筋</th>
                  </tr>
                  ${spans.map((s, i) => html`
                    <tr>
                      <td class="rownum">${i + 5}</td>
                      ${i === 0 ? html`
                        <td class="place" rowspan="7">&lt;1-600,E<br/>-25;11+6<br/>00,E-25&gt;</td>
                        <td class="kl" rowspan="7">KL11(9B)</td>` : ''}
                      <td>${s.no}</td><td>12.97</td><td>12.97</td><td></td>
                      <td>${s.a2}</td><td>${s.a3}</td><td>${s.a4}</td><td>${s.len}</td><td>${s.sec}</td><td>(125)</td><td></td>
                      <td>${s.l ? this.rebar() : ''}</td><td>${s.mid ? this.rebar() : ''}</td><td>${s.r ? this.rebar() : ''}</td><td></td>
                    </tr>`)}
                </table>
              </div>
              <div class="track"><div class="thumb"></div></div>
            </div>
          </div>
        </div>

        <div class="right">
          <div class="pane-head"></div>
          <div class="r-title">显示设置</div>
          <div class="r-tabs"><div class="r-tab">图元显示</div><div class="r-tab off">楼层</div></div>
          <div class="r-grid">
            <div class="r-head">图层构件</div>
            ${layers.map(([t, l]) => html`
              <div class="r-row l${l}">
                ${l === 1 ? html`<i class="v"></i>` : ''}
                ${l < 2 ? html`<i class="minus">−</i>` : ''}
                ${t}
              </div>`)}
          </div>
        </div>
      </div>
    `;
  }
}
